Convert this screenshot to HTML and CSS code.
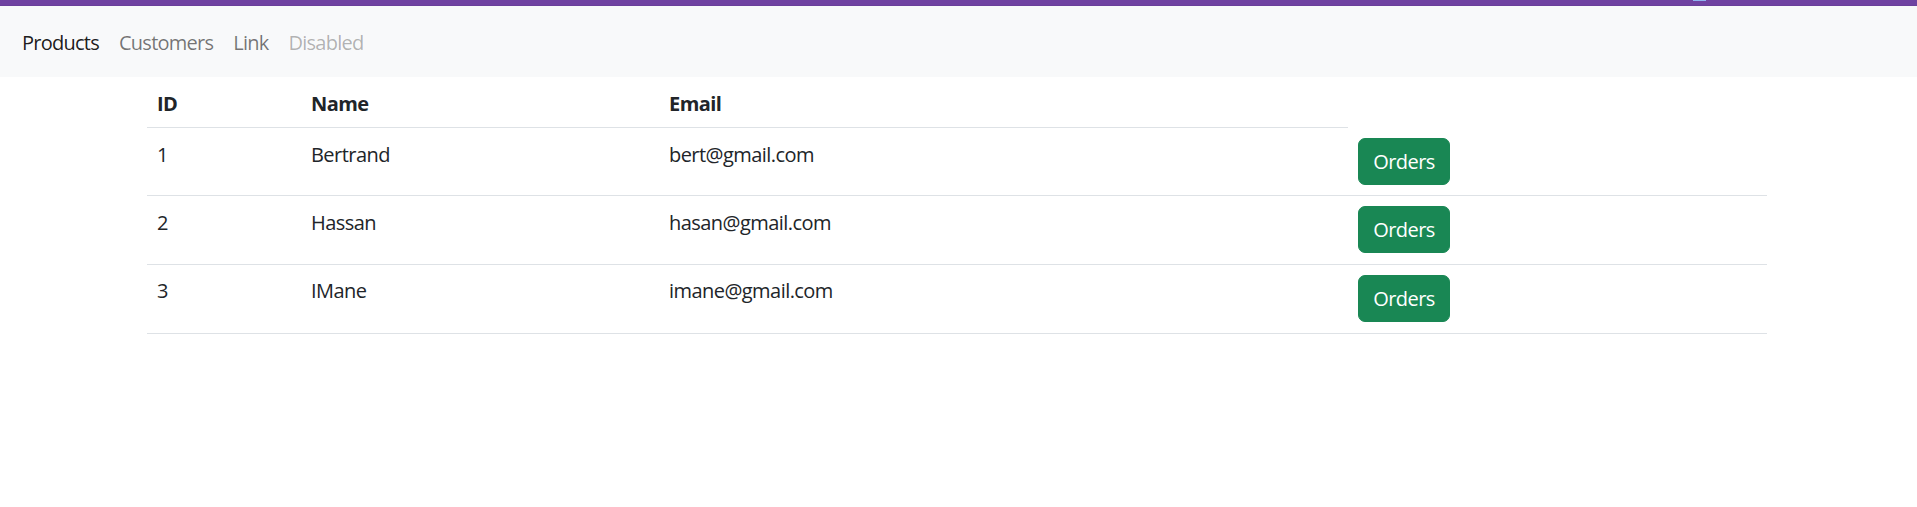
FILE: index.html
```html
<!DOCTYPE html>
<html lang="en">
<head>
<meta charset="utf-8">
<title>Customers</title>
<link rel="stylesheet" href="styles.css">
</head>
<body>
<div class="topbar"><span class="topbar-mark"></span></div>
<nav class="navbar">
  <ul class="nav">
    <li><a class="nav-link active" href="#">Products</a></li>
    <li><a class="nav-link" href="#">Customers</a></li>
    <li><a class="nav-link" href="#">Link</a></li>
    <li><a class="nav-link disabled">Disabled</a></li>
  </ul>
</nav>
<main class="container">
  <table class="table">
    <colgroup>
      <col class="col-id"><col class="col-name"><col class="col-email"><col class="col-action">
    </colgroup>
    <thead>
      <tr><th>ID</th><th>Name</th><th>Email</th></tr>
    </thead>
    <tbody>
      <tr><td>1</td><td>Bertrand</td><td>bert@gmail.com</td><td class="cell-action"><button class="btn">Orders</button></td></tr>
      <tr><td>2</td><td>Hassan</td><td>hasan@gmail.com</td><td class="cell-action"><button class="btn">Orders</button></td></tr>
      <tr><td>3</td><td>IMane</td><td>imane@gmail.com</td><td class="cell-action"><button class="btn">Orders</button></td></tr>
    </tbody>
  </table>
</main>
</body>
</html>
```
FILE: styles.css
```css
* { box-sizing: border-box; }
html, body { margin: 0; padding: 0; background: #fff; }
body {
  font-family: "Open Sans", "Noto Sans", sans-serif;
  font-size: 20px;
  line-height: 30px;
  color: #212529;
  letter-spacing: -0.55px;
}
.topbar {
  position: relative;
  height: 6px;
  background: #6f42a1;
  box-shadow: inset 0 -1px 0 #6a3f9a;
}
.topbar-mark {
  position: absolute;
  left: 1693px;
  top: 0;
  width: 13px;
  height: 1px;
  background: #8fb3f0;
}
.navbar {
  background: #f8f9fa;
  padding: 10.5px 0 10.5px 12px;
}
.nav {
  list-style: none;
  margin: 0;
  padding: 0;
  display: flex;
}
.nav-link {
  display: block;
  padding: 11.5px 10px 8.5px;
  text-decoration: none;
  color: rgba(0, 0, 0, 0.55);
  letter-spacing: -0.75px;
}
.nav-link.active { color: rgba(0, 0, 0, 0.9); }
.nav-link.disabled { color: rgba(0, 0, 0, 0.3); }
.container {
  width: 1620px;
  margin-left: 147px;
}
.table {
  width: 1620px;
  table-layout: fixed;
  border-collapse: collapse;
  vertical-align: top;
}
.col-id { width: 154px; }
.col-name { width: 358px; }
.col-email { width: 689px; }
.col-action { width: 419px; }
.table th, .table td {
  padding: 11.5px 10px 8.5px;
  text-align: left;
  vertical-align: top;
  border-bottom: 1px solid #dee2e6;
}
.table td.cell-action {
  padding: 10px 10px 10.7px;
}
.table th { font-weight: 700; }
.btn {
  display: block;
  font-family: inherit;
  font-size: 20px;
  line-height: 30px;
  letter-spacing: -0.55px;
  color: #fff;
  background: #198754;
  border: 1px solid #198754;
  border-radius: 7px;
  padding: 8px 0 7px;
  height: 47px;
  width: 92px;
  cursor: pointer;
}
```
